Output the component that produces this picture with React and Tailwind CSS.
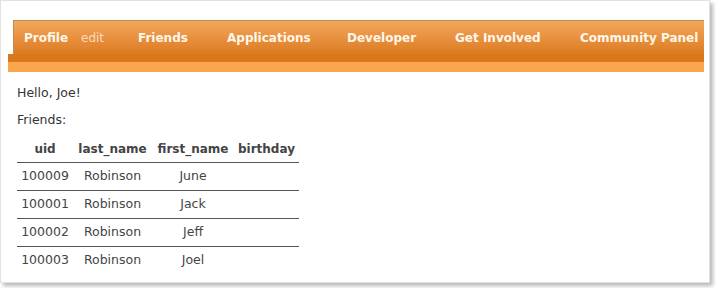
import React from 'react';

const friends = [
  { uid: '100009', last: 'Robinson', first: 'June' },
  { uid: '100001', last: 'Robinson', first: 'Jack' },
  { uid: '100002', last: 'Robinson', first: 'Jeff' },
  { uid: '100003', last: 'Robinson', first: 'Joel' },
];

const App = () => {
  return (
    <div className="w-[716px] h-[288px] bg-white font-['DejaVu_Sans',sans-serif]">
      <div className="w-[710px] h-[283px] border border-[#e2e2e2] bg-white shadow-[3px_3px_4px_rgba(0,0,0,0.28)] pt-[19px]">
        {/* Nav bar */}
        <div className="ml-[7px] w-[696px]">
          <div className="ml-[5px] h-[34px] border-l border-t border-[#b98a5c] bg-gradient-to-b from-[#f4a75a] to-[#dc7b1e] flex items-center pt-[1px] text-[12px] text-[#fff7ea] whitespace-nowrap">
            <span className="ml-[10px] w-[57px] shrink-0 font-bold">Profile</span>
            <span className="w-[57px] shrink-0 text-[#f8dcbd]">edit</span>
            <span className="w-[89px] shrink-0 font-bold">Friends</span>
            <span className="w-[120px] shrink-0 font-bold">Applications</span>
            <span className="w-[108px] shrink-0 font-bold">Developer</span>
            <span className="w-[125px] shrink-0 font-bold">Get Involved</span>
            <span className="shrink-0 font-bold">Community Panel</span>
          </div>
          <div className="h-[8px] bg-[#d9781b]" />
          <div className="h-[10px] bg-[#fba54e]" />
        </div>

        {/* Content */}
        <div className="pl-[16px] text-[12.5px] text-[#333]">
          <p className="mt-[13px] leading-[16px]">Hello, Joe!</p>
          <p className="mt-[11px] leading-[16px]">Friends:</p>
          <table className="mt-[9px] w-[282px] table-fixed border-collapse text-[#444]">
            <thead>
              <tr className="h-[25px] border-b border-[#555]">
                <th className="w-[56px] text-[12px] font-bold text-center">uid</th>
                <th className="w-[79px] text-[12px] font-bold text-center">last_name</th>
                <th className="w-[82px] text-[12px] font-bold text-center">first_name</th>
                <th className="w-[65px] text-[12px] font-bold text-center">birthday</th>
              </tr>
            </thead>
            <tbody>
              {friends.map((f, i) => (
                <tr key={f.uid} className={i < friends.length - 1 ? 'h-[28px] border-b border-[#555]' : 'h-[28px]'}>
                  <td className="text-center">{f.uid}</td>
                  <td className="text-center">{f.last}</td>
                  <td className="text-center">{f.first}</td>
                  <td className="text-center"></td>
                </tr>
              ))}
            </tbody>
          </table>
        </div>
      </div>
    </div>
  );
};

export default App;
